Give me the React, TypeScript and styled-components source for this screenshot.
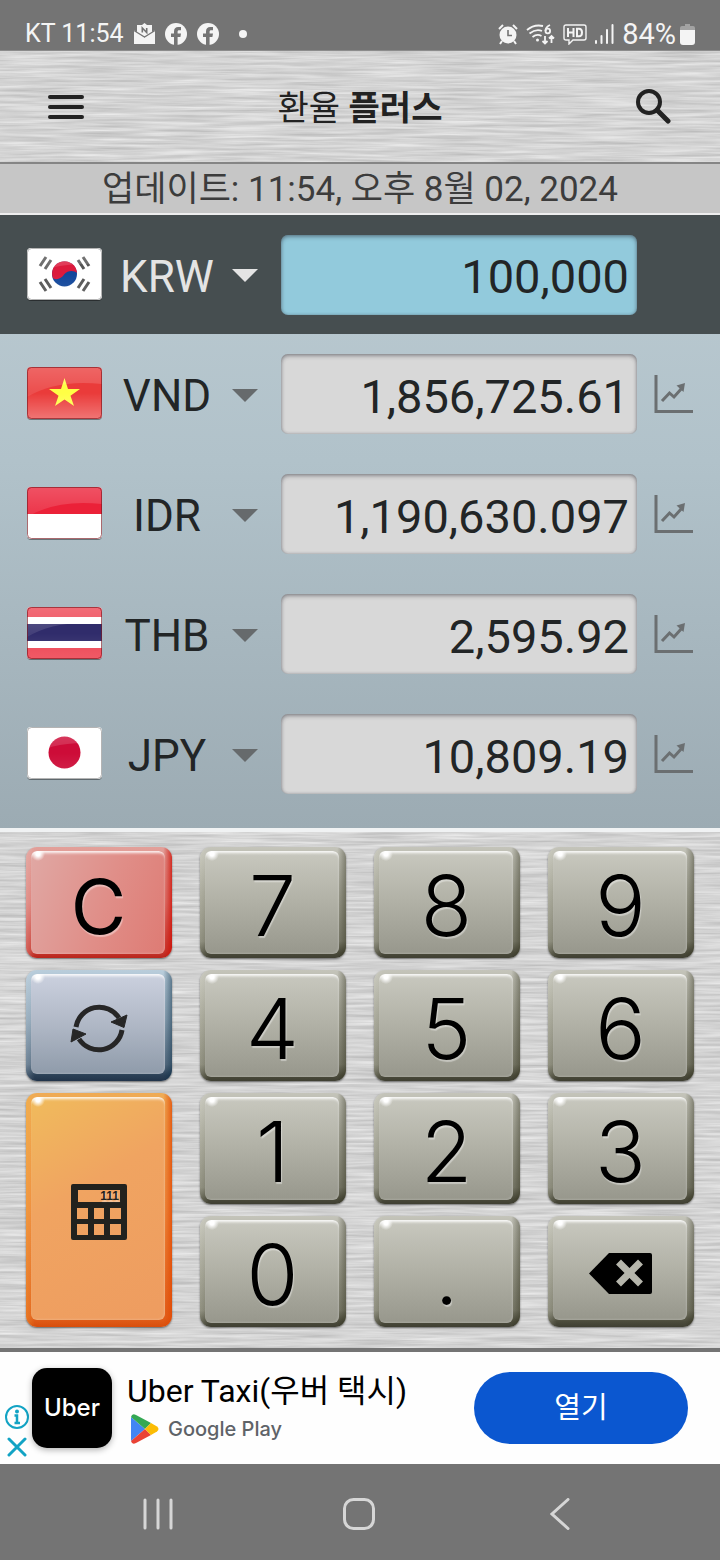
import React from 'react';
import styled, { createGlobalStyle } from 'styled-components';

const brushed = `url("data:image/svg+xml,${encodeURIComponent(
  `<svg xmlns='http://www.w3.org/2000/svg' width='1440' height='520'><filter id='b' x='0' y='0' width='100%' height='100%' color-interpolation-filters='sRGB'><feTurbulence type='fractalNoise' baseFrequency='0.014 0.34' numOctaves='3' seed='7'/><feColorMatrix values='0.24 0 0 0 0.71 0.24 0 0 0 0.71 0.24 0 0 0 0.71 0 0 0 0 1'/></filter><rect width='1440' height='520' filter='url(#b)'/></svg>`
)}")`;

const GlobalStyle = createGlobalStyle`
  * { box-sizing: border-box; }
  body {
    margin: 0;
    background: #747474;
    font-family: Roboto, 'Noto Sans CJK KR', sans-serif;
  }
  button, input, select { font: inherit; color: inherit; border: 0; margin: 0; padding: 0; background: none; }
  svg { display: block; flex: none; }
`;

const Page = styled.div`
  display: flex;
  flex-direction: column;
  min-height: 100vh;
`;

const StatusBar = styled.div`
  display: flex;
  align-items: center;
  height: 51px;
  padding: 18px 25px 0;
  border-bottom: 1px solid #8c8c8c;
  background: #747474;
  color: #f4f4f4;
  font-size: 25px;
  line-height: 32px;
`;

const StatusGroup = styled.div`
  display: flex;
  align-items: center;
  gap: 10px;
`;

const StatusIcons = styled(StatusGroup)`
  gap: 8px;
  margin-left: auto;
`;

const Battery = styled.span`
  display: flex;
  align-items: center;
  gap: 4px;
  font-size: 29px;
`;

const Header = styled.header`
  display: flex;
  align-items: center;
  justify-content: space-between;
  height: 113px;
  padding: 0 46px;
  border-bottom: 2px solid #858585;
  background: ${brushed} 0 0 / 1440px 520px;
`;

const IconButton = styled.button`
  display: grid;
  place-items: center;
  width: 40px;
  height: 48px;
`;

const Title = styled.h1`
  margin: 0;
  padding-top: 2px;
  color: #222;
  font-size: 34px;
  font-weight: 400;
  line-height: 40px;
`;

const Updated = styled.p`
  margin: 0;
  height: 51px;
  border-bottom: 2px solid #eee;
  background: #c6c6c6;
  color: #3c3c3c;
  font-size: 35px;
  line-height: 52px;
  text-align: center;
`;

const Rates = styled.main`
  padding-bottom: 14px;
  border-bottom: 4px solid #f0f2f3;
  background: linear-gradient(#bccbd2, #b1c2ca 40%, #9cabb3);
`;

const Row = styled.div<{ $active?: boolean }>`
  display: flex;
  align-items: center;
  height: ${p => (p.$active ? 119 : 120)}px;
  padding: 0 27px;
  background: ${p => (p.$active ? '#464e50' : 'transparent')};
  color: ${p => (p.$active ? '#e4e4e4' : '#222526')};
`;

const Picker = styled.span`
  display: grid;
  align-items: center;
  width: 156px;
  margin: 2px 13px 0 10px;
  > * { grid-area: 1 / 1; }
  > svg { justify-self: end; margin-right: 10px; pointer-events: none; }
`;

const CurrencySelect = styled.select`
  appearance: none;
  width: 100%;
  height: 60px;
  padding: 2px 46px 0 0;
  font-size: 44px;
  text-align: center;
  text-align-last: center;
  option { color: #222; }
`;

const Amount = styled.input<{ $active?: boolean }>`
  flex: 1;
  min-width: 0;
  height: 80px;
  padding: 4px 8px 0;
  border-radius: 7px;
  background: ${p => (p.$active ? '#92cadc' : '#d8d8d8')};
  box-shadow: inset 0 2px 4px rgba(40, 40, 50, 0.4), inset 0 0 3px rgba(40, 40, 50, 0.3);
  color: #222526;
  font-size: 47px;
  text-align: right;
`;

const ChartSlot = styled.span`
  display: flex;
  justify-content: flex-end;
  width: 56px;
`;

const Keypad = styled.section`
  display: grid;
  grid-template-columns: repeat(4, 1fr);
  grid-auto-rows: 111px;
  gap: 12px 28px;
  padding: 15px 26px 21px;
  border-bottom: 4px solid #747474;
  background: ${brushed} -300px 0 / 1440px 520px;
`;

type Tone = 'stone' | 'red' | 'blue' | 'orange';

const tones: Record<Tone, { face: string; rim: string; left: string; right: string }> = {
  stone: {
    face: 'linear-gradient(#c8c8bf, #b3b3a8 45%, #97978c)',
    rim: 'linear-gradient(#c4c4ba, #a0a092 40%, #7c7c6c 85%, #4c4c3c 95%, #3f3f32)',
    left: 'rgba(235, 235, 220, 0.2)',
    right: 'rgba(40, 40, 20, 0.4)',
  },
  red: {
    face: 'linear-gradient(110deg, #e0a8a4, #e08e88 55%, #de7b74)',
    rim: 'linear-gradient(#e2a09a, #dd7d76 50%, #c8382f 94%, #b8251c)',
    left: 'rgba(235, 200, 195, 0.3)',
    right: 'rgba(205, 10, 0, 0.75)',
  },
  blue: {
    face: 'linear-gradient(#cbd1df, #b0b8c6 50%, #8f9baa)',
    rim: 'linear-gradient(#b9cddb, #8fa5b6 45%, #5b7084 85%, #2b4056 95%, #22344a)',
    left: 'rgba(210, 225, 235, 0.2)',
    right: 'rgba(10, 45, 70, 0.5)',
  },
  orange: {
    face: 'linear-gradient(150deg, #f0bb5c, #f0a461 40%, #ee9c60)',
    rim: 'linear-gradient(#efab55, #ee8c40 50%, #e2601c 96%, #d84e0c)',
    left: 'rgba(245, 180, 60, 0.3)',
    right: 'rgba(225, 70, 0, 0.75)',
  },
};

const KeyButton = styled.button<{ $tone: Tone; $tall?: boolean }>`
  display: grid;
  grid-row: span ${p => (p.$tall ? 2 : 1)};
  padding: 4px 7px 7px 5px;
  border-radius: 11px;
  background:
    linear-gradient(90deg, ${p => tones[p.$tone].left}, transparent 6%, transparent 94%, ${p => tones[p.$tone].right}),
    ${p => tones[p.$tone].rim};
  box-shadow: 0 1px 2px rgba(0, 0, 0, 0.5);
`;

const KeyFace = styled.span<{ $tone: Tone; $letter?: boolean }>`
  display: grid;
  place-items: center;
  padding: 7px 0 0 1px;
  border-radius: 6px;
  background:
    radial-gradient(circle at 7px 3px, #fff 2px, rgba(255, 255, 255, 0) 7px),
    ${p => tones[p.$tone].face};
  box-shadow: inset 0 4px 3px -2px rgba(255, 255, 255, 0.9), inset -1px -1px 2px rgba(255, 255, 255, 0.15);
  color: #000;
  font-family: Inter, 'Liberation Sans', sans-serif;
  font-size: ${p => (p.$letter ? 76 : 84)}px;
  font-weight: ${p => (p.$letter ? 400 : 300)};
  line-height: 96px;
  text-shadow: 1px 2px 1px rgba(255, 255, 255, 0.4);
`;

const Ad = styled.aside`
  display: flex;
  height: 112px;
  padding-right: 32px;
  background: #fefefe;
`;

const AdControls = styled.div`
  display: flex;
  flex-direction: column;
  justify-content: flex-end;
  align-items: center;
  gap: 4px;
  width: 32px;
  padding: 0 0 4px 2px;
`;

const AdButton = styled.button`
  display: grid;
  place-items: center;
  width: 26px;
  height: 26px;
`;

const AdLogo = styled.div`
  flex: none;
  align-self: center;
  width: 80px;
  height: 80px;
  border-radius: 15px;
  background: #000;
  box-shadow: 0 2px 6px rgba(0, 0, 0, 0.3);
  color: #fff;
  font: 500 24px/80px Inter, sans-serif;
  text-align: center;
`;

const AdText = styled.div`
  flex: 1;
  margin-left: 15px;
  padding-top: 19px;
`;

const AdTitle = styled.div`
  color: #000;
  font-size: 32px;
  line-height: 40px;
  white-space: nowrap;
`;

const Store = styled.div`
  display: flex;
  align-items: center;
  gap: 9px;
  margin-left: 4px;
  color: #5f6368;
  font: 500 20px/36px Inter, sans-serif;
`;

const OpenLink = styled.a`
  align-self: center;
  width: 214px;
  border-radius: 36px;
  background: #0b57d0;
  color: #fff;
  font-size: 29px;
  line-height: 72px;
  text-align: center;
  text-decoration: none;
`;

const NavBar = styled.nav`
  display: flex;
  flex: 1;
  min-height: 96px;
  padding: 0 60px 0 57px;
  background: #747474;
`;

const NavButton = styled.button`
  display: grid;
  flex: 1;
  place-items: center;
  padding-top: 4px;
`;

const MailIcon = () => (
  <svg width="21" height="22" viewBox="0 0 21 22">
    <path d="M3 2H8L10.500 0L13 2H18V10L10.500 14L3 10Z" fill="#f4f4f4" />
    <path d="M0 7L10.500 14.500L21 7V21H0Z" fill="#f4f4f4" />
    <path d="M0 7.500L10.500 14L21 7.500" fill="none" stroke="#747474" strokeWidth="1.200" />
    <path d="M8.300 9.500V5L12.700 9.500V5" fill="none" stroke="#747474" strokeWidth="1.600" />
  </svg>
);

const FacebookIcon = () => (
  <svg width="22" height="22" viewBox="0 0 22 22">
    <circle cx="11" cy="11" r="11" fill="#f4f4f4" />
    <path d="M9 22V14H6V10.500H9V8.500C9 5.500 10.500 4 13.200 4H16V7.200H14.200C13 7.200 12.600 7.800 12.600 8.800V10.500H16L15.400 14H12.600V22Z" fill="#747474" />
  </svg>
);

const AlarmIcon = () => (
  <svg width="20" height="21" viewBox="0 0 20 21">
    <circle cx="10" cy="11" r="8.500" fill="#f4f4f4" />
    <path d="M1 5L5 1M19 5L15 1M4 17L2 20M16 17L18 20" stroke="#f4f4f4" strokeWidth="2" />
    <path d="M10 6V11.500H14" fill="none" stroke="#747474" strokeWidth="1.600" />
  </svg>
);

const WifiIcon = () => (
  <svg width="29" height="21" viewBox="0 0 29 21" fill="none" stroke="#f4f4f4" strokeWidth="1.800">
    <path d="M1 6Q8 0 17 2M3.500 9.500Q10 4.500 16 7M6.500 13Q11 9.500 15.500 12" />
    <circle cx="11.500" cy="16" r="1.500" fill="#f4f4f4" stroke="none" />
    <path d="M24 1Q19.500 3 19.500 7" />
    <circle cx="21.800" cy="7" r="2.300" />
    <path d="M19 12V19.500M16.500 17L19 19.500L21.500 17M25.500 19V12M23 14.500L25.500 12L28 14.500" />
  </svg>
);

const HdIcon = () => (
  <svg width="24" height="21" viewBox="0 0 24 21" fill="none" stroke="#f4f4f4">
    <path d="M3 1H21Q23 1 23 3V14Q23 16 21 16H10L6 20V16H3Q1 16 1 14V3Q1 1 3 1Z" strokeWidth="1.400" />
    <path d="M5 4V13M10.500 4V13M5 8.500H10.500M14 4.800V12.200H16Q19 12.200 19 8.500T16 4.800Z" strokeWidth="2" />
  </svg>
);

const SignalIcon = () => (
  <svg width="19" height="20" viewBox="0 0 19 20" stroke="#f4f4f4" strokeWidth="2" strokeLinecap="round">
    <path d="M1 17V19M6.500 12V19M12 6V19M17.500 1V19" />
  </svg>
);

const BatteryIcon = () => (
  <svg width="15" height="21" viewBox="0 0 15 21">
    <path d="M5 0H10V2H13Q15 2 15 4V8H0V4Q0 2 2 2H5Z" fill="#a2a2a2" />
    <path d="M0 6H15V18Q15 21 12 21H3Q0 21 0 18Z" fill="#f4f4f4" />
  </svg>
);

const ChartIcon = () => (
  <svg width="39" height="39" viewBox="0 0 39 39" fill="none" stroke="#6b6f71">
    <path d="M2 0V36.500H39" strokeWidth="3" />
    <path d="M8 26L15.500 18L20 22L28 13" strokeWidth="3" />
    <path d="M31 8L29.500 17L22.500 10.500Z" fill="#6b6f71" stroke="none" />
  </svg>
);

const Caret = ({ color }: { color: string }) => (
  <svg width="26" height="13" viewBox="0 0 26 13"><path d="M0 0H26L13 13Z" fill={color} /></svg>
);

const flagArt: Record<string, React.ReactNode> = {
  KRW: (
    <>
      <rect width="75" height="52" fill="#fff" />
      <circle cx="37.500" cy="26" r="12.500" fill="#12479b" />
      <path d="M25.800 30A12.500 12.500 0 1 1 50 25C48 22.500 41 21.500 37.500 26C34.500 31 29 32.500 25.800 30Z" fill="#dc1a3c" />
      <g stroke="#555" strokeWidth="3">
        <path d="M13 18L19 9M18 21L24 12M13 34L19 43M18 31L24 40M62 18L56 9M57 21L51 12M62 34L56 43M57 31L51 40" />
      </g>
    </>
  ),
  VND: (
    <>
      <rect width="75" height="52" fill="#ea3b3a" />
      <path d="M37.500 11L41 22H53L43.500 28.800L47 39L37.500 32.500L28 39L31.500 28.800L22 22H34Z" fill="#ffff45" />
    </>
  ),
  IDR: (
    <>
      <rect width="75" height="52" fill="#fff" />
      <rect width="75" height="27" fill="#eb2138" />
    </>
  ),
  THB: (
    <>
      <rect width="75" height="52" fill="#fff" />
      <path d="M0 0H75V10H0ZM0 41H75V52H0Z" fill="#ee4452" />
      <rect y="17" width="75" height="17" fill="#302c6b" />
    </>
  ),
  JPY: (
    <>
      <rect width="75" height="52" fill="#fff" />
      <circle cx="37.500" cy="25.500" r="16" fill="#cd0c38" />
    </>
  ),
};

const Flag = ({ code }: { code: string }) => {
  const dark = code !== 'KRW' && code !== 'JPY';
  return (
    <svg width="75" height="54" viewBox="0 0 75 54">
      <defs>
        <clipPath id={`clip-${code}`}><rect width="75" height="52" rx="4" /></clipPath>
        <linearGradient id={`gloss-${code}`} x1="0" y1="0" x2="0" y2="1">
          <stop offset="0" stopColor="#fff" stopOpacity="0.22" />
          <stop offset="1" stopColor="#fff" stopOpacity="0.08" />
        </linearGradient>
        <linearGradient id={`glow-${code}`} x1="0" y1="0" x2="0" y2="1">
          <stop offset="0.500" stopColor="#fff" stopOpacity="0" />
          <stop offset="1" stopColor="#fff" stopOpacity={code === 'VND' ? 0.3 : 0.12} />
        </linearGradient>
      </defs>
      <rect y="1" width="75" height="52" rx="4" fill="#000" opacity="0.4" />
      <g clipPath={`url(#clip-${code})`}>
        {flagArt[code]}
        <path d="M0 0H75V17Q30 12 0 30Z" fill={`url(#gloss-${code})`} />
        <rect width="75" height="52" fill={`url(#glow-${code})`} />
      </g>
      <rect x="0.500" y="0.500" width="74" height="51" rx="4" fill="none" stroke={dark ? '#7d1820' : '#777'} strokeOpacity={dark ? 0.65 : 0.55} />
    </svg>
  );
};

const RefreshIcon = () => (
  <svg width="58" height="54" viewBox="0 0 58 54">
    <g fill="none" stroke="#262626" strokeWidth="5">
      <path d="M6 26A23.500 23.500 0 0 1 49 17" />
      <path d="M52 29A23.500 23.500 0 0 1 9 38" />
    </g>
    <path d="M57 14L54 26.500L41 21Z" fill="#262626" stroke="#262626" strokeLinejoin="round" />
    <path d="M3 28L16 33L1 41Z" fill="#262626" stroke="#262626" strokeLinejoin="round" />
  </svg>
);

const CalculatorIcon = () => (
  <svg width="56" height="56" viewBox="0 0 56 56">
    <path
      fillRule="evenodd"
      fill="#22221e"
      d="M2 0H54Q56 0 56 2V54Q56 56 54 56H2Q0 56 0 54V2Q0 0 2 0ZM7 6V18H49V6ZM6 24V35H17V24ZM23 24V35H33V24ZM39 24V35H50V24ZM6 40V51H17V40ZM23 40V51H33V40ZM39 40V51H50V40Z"
    />
    <text x="48" y="16" textAnchor="end" fontFamily="Liberation Sans, sans-serif" fontWeight="700" fontSize="12" fill="#22221e">111</text>
  </svg>
);

const BackspaceIcon = () => (
  <svg width="64" height="43" viewBox="0 0 64 43">
    <path d="M20 1H61Q63 1 63 3V40Q63 42 61 42H20L0 21.500Z" fill="#000" />
    <path d="M29.500 10L51.500 32M51.500 10L29.500 32" stroke="#b6b6ac" strokeWidth="7" />
  </svg>
);

const PlayIcon = () => (
  <svg width="28" height="30" viewBox="0 0 28 30">
    <path d="M0 3V27L14 15Z" fill="#4285f4" />
    <path d="M0 3Q1-1 5 1L20 9L14 15Z" fill="#34a853" />
    <path d="M0 27Q1 31 5 29L20 21L14 15Z" fill="#ea4335" />
    <path d="M20 9L26 12.500Q29 15 26 17.500L20 21L14 15Z" fill="#fbbc04" />
  </svg>
);

const rates = [
  { code: 'KRW', amount: '100,000' },
  { code: 'VND', amount: '1,856,725.61' },
  { code: 'IDR', amount: '1,190,630.097' },
  { code: 'THB', amount: '2,595.92' },
  { code: 'JPY', amount: '10,809.19' },
];

type KeyDef = { id: string; tone?: Tone; tall?: boolean; icon?: React.ReactNode };

const keys: KeyDef[] = [
  { id: 'C', tone: 'red' }, { id: '7' }, { id: '8' }, { id: '9' },
  { id: '새로고침', tone: 'blue', icon: <RefreshIcon /> }, { id: '4' }, { id: '5' }, { id: '6' },
  { id: '계산기', tone: 'orange', tall: true, icon: <CalculatorIcon /> }, { id: '1' }, { id: '2' }, { id: '3' },
  { id: '0' }, { id: '.' }, { id: '지우기', icon: <BackspaceIcon /> },
];

const Key = ({ id, tone = 'stone', tall, icon }: KeyDef) => (
  <KeyButton type="button" $tone={tone} $tall={tall} aria-label={id}>
    <KeyFace $tone={tone} $letter={id === 'C'}>{icon ?? id}</KeyFace>
  </KeyButton>
);

const RateRow = ({ code, amount, active }: { code: string; amount: string; active: boolean }) => (
  <Row $active={active}>
    <Flag code={code} />
    <Picker>
      <CurrencySelect defaultValue={code} aria-label={`${code} 통화`}>
        {rates.map(r => <option key={r.code}>{r.code}</option>)}
      </CurrencySelect>
      <Caret color={active ? '#e4e4e4' : '#666a6c'} />
    </Picker>
    <Amount $active={active} defaultValue={amount} inputMode="decimal" aria-label={`${code} 금액`} />
    <ChartSlot>
      {!active && <IconButton type="button" aria-label={`${code} 차트`}><ChartIcon /></IconButton>}
    </ChartSlot>
  </Row>
);

export default function App() {
  return (
    <Page>
      <GlobalStyle />
      <StatusBar>
        <StatusGroup>
          <span>KT 11:54</span>
          <MailIcon />
          <FacebookIcon />
          <FacebookIcon />
          <svg width="26" height="8" viewBox="0 0 26 8"><circle cx="14" cy="4" r="4" fill="#f4f4f4" /></svg>
        </StatusGroup>
        <StatusIcons>
          <AlarmIcon />
          <WifiIcon />
          <HdIcon />
          <SignalIcon />
          <Battery>84%<BatteryIcon /></Battery>
        </StatusIcons>
      </StatusBar>
      <Header>
        <IconButton type="button" aria-label="메뉴">
          <svg width="36" height="24" viewBox="0 0 36 24" stroke="#222" strokeWidth="4" strokeLinecap="round">
            <path d="M2 2H34M2 12H34M2 22H34" />
          </svg>
        </IconButton>
        <Title>환율 <b>플러스</b></Title>
        <IconButton type="button" aria-label="검색">
          <svg width="36" height="35" viewBox="0 0 36 35" fill="none" stroke="#222">
            <circle cx="13" cy="13" r="11" strokeWidth="4" />
            <path d="M21 21L32 32" strokeWidth="5" strokeLinecap="round" />
          </svg>
        </IconButton>
      </Header>
      <Updated>업데이트: 11:54, 오후 8월 02, 2024</Updated>
      <Rates>
        {rates.map((r, i) => <RateRow key={r.code} {...r} active={i === 0} />)}
      </Rates>
      <Keypad>
        {keys.map(k => <Key key={k.id} {...k} />)}
      </Keypad>
      <Ad>
        <AdControls>
          <AdButton type="button" aria-label="광고 정보">
            <svg width="24" height="24" viewBox="0 0 24 24" fill="none" stroke="#12a3c4">
              <circle cx="12" cy="12" r="11" strokeWidth="2" />
              <circle cx="12" cy="6.500" r="2" fill="#12a3c4" stroke="none" />
              <path d="M9.500 10.500H12V18M9.500 18H15" strokeWidth="2.500" />
            </svg>
          </AdButton>
          <AdButton type="button" aria-label="광고 닫기">
            <svg width="20" height="20" viewBox="0 0 20 20" stroke="#12a3c4" strokeWidth="3" strokeLinecap="round">
              <path d="M2 2L18 18M18 2L2 18" />
            </svg>
          </AdButton>
        </AdControls>
        <AdLogo>Uber</AdLogo>
        <AdText>
          <AdTitle>Uber Taxi(우버 택시)</AdTitle>
          <Store><PlayIcon />Google Play</Store>
        </AdText>
        <OpenLink href="#open">열기</OpenLink>
      </Ad>
      <NavBar>
        <NavButton type="button" aria-label="최근 앱">
          <svg width="30" height="32" viewBox="0 0 30 32" stroke="#d6d6d6" strokeWidth="3" strokeLinecap="round">
            <path d="M2 2V30M15 2V30M28 2V30" />
          </svg>
        </NavButton>
        <NavButton type="button" aria-label="홈">
          <svg width="32" height="32" viewBox="0 0 32 32" fill="none" stroke="#d6d6d6" strokeWidth="3">
            <rect x="1.500" y="1.500" width="29" height="29" rx="9" />
          </svg>
        </NavButton>
        <NavButton type="button" aria-label="뒤로">
          <svg width="20" height="32" viewBox="0 0 20 32" fill="none" stroke="#d6d6d6" strokeWidth="3" strokeLinecap="round">
            <path d="M18 1.500L2 16L18 30.500" />
          </svg>
        </NavButton>
      </NavBar>
    </Page>
  );
}
